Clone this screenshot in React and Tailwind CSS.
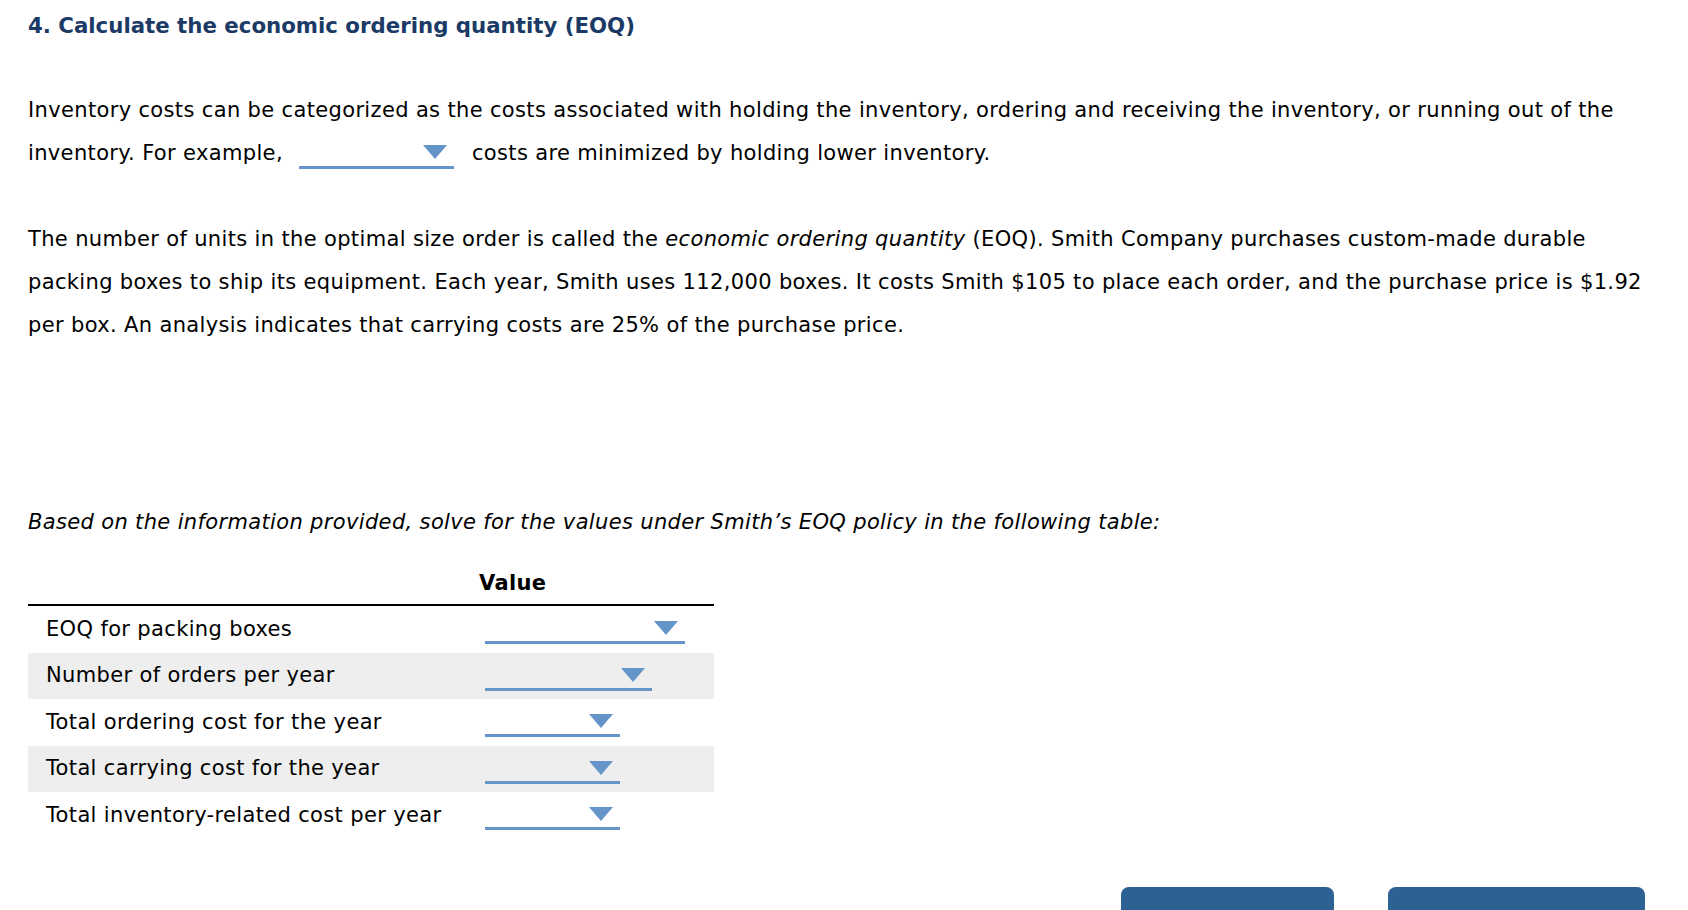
import React from "react";

const rows = [
  { label: "EOQ for packing boxes", width: 200 },
  { label: "Number of orders per year", width: 167 },
  { label: "Total ordering cost for the year", width: 135 },
  { label: "Total carrying cost for the year", width: 135 },
  { label: "Total inventory-related cost per year", width: 135 },
];

const Arrow = ({ className = "" }) => (
  <svg width="24" height="14" viewBox="0 0 24 14" className={className}>
    <polygon points="0,0 24,0 12,14" fill="#6494c8" />
  </svg>
);

export default function App() {
  return (
    <div className="relative h-[910px] w-[1688px] overflow-hidden bg-white pl-[28px] pt-[11px] font-['DejaVu_Sans',sans-serif] text-[21px] tracking-[0.35px] text-black">
      <h1 className="text-[21.3px] font-bold leading-[30px] tracking-[0px] text-[#1b3a66]">
        4. Calculate the economic ordering quantity (EOQ)
      </h1>

      <p className="mt-[48px] leading-[43px] whitespace-nowrap">
        Inventory costs can be categorized as the costs associated with holding the inventory, ordering and receiving the inventory, or running out of the
        <br />
        inventory. For example,
        <span className="mb-[6px] ml-[16px] mr-[18px] inline-flex h-[30px] w-[155px] items-end justify-end border-b-[3px] border-[#6494c8] align-bottom">
          <Arrow className="mb-[7px] mr-[7px]" />
        </span>
        costs are minimized by holding lower inventory.
      </p>

      <p className="mt-[43px] leading-[43px] whitespace-nowrap">
        The number of units in the optimal size order is called the <i>economic ordering quantity</i> (EOQ). Smith Company purchases custom-made durable
        <br />
        packing boxes to ship its equipment. Each year, Smith uses 112,000 boxes. It costs Smith $105 to place each order, and the purchase price is $1.92
        <br />
        per box. An analysis indicates that carrying costs are 25% of the purchase price.
      </p>

      <p className="mt-[154px] italic leading-[43px]">
        Based on the information provided, solve for the values under Smith’s EOQ policy in the following table:
      </p>

      <div className="mt-[20px] w-[686px]">
        <div className="flex h-[42px] items-center border-b-2 border-black">
          <div className="w-[451px]" />
          <div className="font-bold">Value</div>
        </div>
        {rows.map((r, i) => (
          <div
            key={r.label}
            className={`flex h-[46.5px] ${i % 2 === 1 ? "bg-[#eeeeee]" : ""}`}
          >
            <div className="flex w-[457px] items-center pl-[18px]">{r.label}</div>
            <div className="pt-[8px]">
              <div
                className="flex h-[30px] items-start justify-end border-b-[3px] border-[#6494c8] pt-[7px]"
                style={{ width: r.width }}
              >
                <Arrow className="mr-[7px]" />
              </div>
            </div>
          </div>
        ))}
      </div>

      <div className="absolute bottom-0 left-[1121px] h-[23px] w-[213px] rounded-t-[8px] bg-[#2c6192]" />
      <div className="absolute bottom-0 left-[1388px] h-[23px] w-[257px] rounded-t-[8px] bg-[#2c6192]" />
    </div>
  );
}
